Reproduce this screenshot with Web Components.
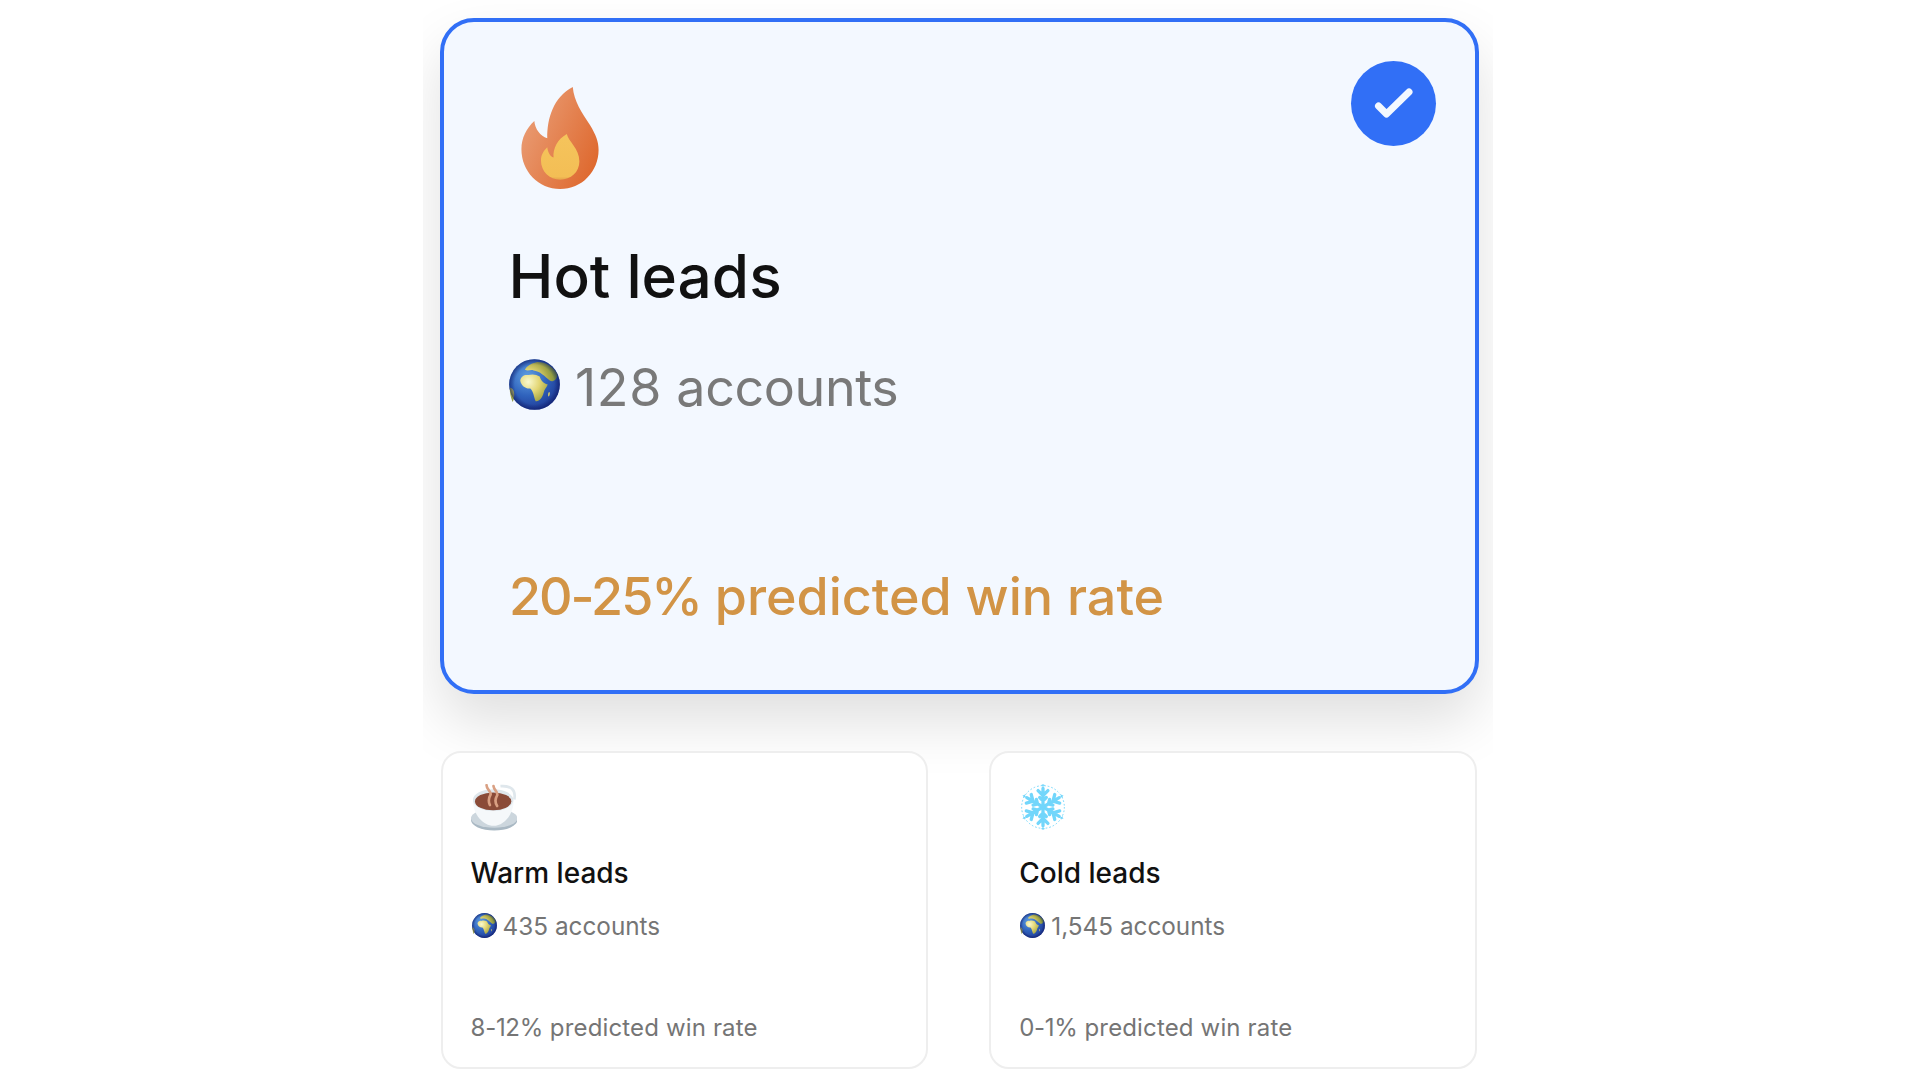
<!doctype html>
<html><head><meta charset="utf-8">
<style>
html,body{margin:0;background:#fff;height:100%;overflow:hidden}
body{font-family:Inter,"Liberation Sans",sans-serif;display:flex;justify-content:flex-start}
</style></head>
<body>
<lead-board>
  <lead-card featured name="Hot leads" accounts="128 accounts" rate="20-25% predicted win rate" icon="flame"></lead-card>
  <lead-card name="Warm leads" accounts="435 accounts" rate="8-12% predicted win rate" icon="coffee"></lead-card>
  <lead-card name="Cold leads" accounts="1,545 accounts" rate="0-1% predicted win rate" icon="snow"></lead-card>
</lead-board>
<script>
let gid=0;
const split=t=>{const i=t.indexOf(' ');return `<span class="num">${t.slice(0,i)}</span><span class="rest">${t.slice(i)}</span>`};
const ICONS={
flame:()=>`<svg viewBox="63 50 233 308" width="78" height="102"><defs><linearGradient id="f" x1="0" y1="0.2" x2="1" y2="0.8"><stop offset="0" stop-color="#ea9f78"/><stop offset="1" stop-color="#de672c"/></linearGradient><linearGradient id="g" x1="0" y1="0" x2="0" y2="1"><stop offset="0" stop-color="#f5c45c"/><stop offset=".93" stop-color="#f3be55"/><stop offset="1" stop-color="#e5a44a"/></linearGradient></defs>
<path fill="url(#f)" d="M218 50C222 95 245 125 270 165C288 195 296 215 296 240C296 305 245 358 180 358C115 358 63 305 63 238C63 205 78 175 102 153C104 178 120 198 141 205C140 145 160 80 218 50Z"/>
<path fill="url(#g)" d="M200 192C205 215 238 235 238 275C238 307 212 330 180 330C148 330 122 305 122 272C122 255 130 243 141 232C143 248 150 260 160 263C158 235 172 208 200 192Z"/></svg>`,
coffee:()=>`<svg viewBox="33 42 139 141" width="46" height="47"><path d="M122 48C150 46 170 56 164 88" fill="none" stroke="#dfe7ec" stroke-width="8"/>
<ellipse cx="103" cy="150" rx="70" ry="32" fill="#a9b8c3"/><ellipse cx="103" cy="145" rx="70" ry="29" fill="#ccd6dd"/>
<path d="M39 90C39 135 70 168 101 168C132 168 162 135 162 90Z" fill="#f5f8fa"/><ellipse cx="100" cy="90" rx="61" ry="33" fill="#dfe7ec"/><ellipse cx="100" cy="94" rx="55" ry="27" fill="#8a4b38"/>
<path d="M80 45C80 60 96 64 92 74C86 84 84 92 90 105M101 48C102 60 116 66 112 76C106 86 104 96 112 108" fill="none" stroke="#d9a083" stroke-width="8" stroke-linecap="round"/></svg>`,
snow:()=>`<svg viewBox="30 27 140 140" width="46" height="46" style="margin-left:1px"><g stroke="#72d6fb" fill="#72d6fb">${[0,60,120,180,240,300].map(r=>`<g transform="rotate(${r} 100 97)"><path d="M100 97V40M100 62 85 47M100 62 115 47M100 78 90 68M100 78 110 68" stroke-width="10" stroke-linecap="round" fill="none"/><path d="M100 26V36M95 31H105" stroke-width="3" fill="none"/></g>`).join('')}<circle cx="100" cy="97" r="65" fill="none" stroke-width="3" stroke-dasharray="5 6"/></g></svg>`,
globe:s=>{const k=++gid;return `<svg viewBox="27 24 151 152" width="${s}" height="${s}"><defs><radialGradient id="o${k}" cx=".36" cy=".34" r=".7"><stop offset="0" stop-color="#5f9fe2"/><stop offset=".55" stop-color="#2f62bc"/><stop offset="1" stop-color="#1f3a94"/></radialGradient><radialGradient id="l${k}" gradientUnits="userSpaceOnUse" cx="84" cy="92" r="88"><stop offset="0" stop-color="#fafad0"/><stop offset=".38" stop-color="#e3d674"/><stop offset=".7" stop-color="#a9a948"/><stop offset="1" stop-color="#6f8a3c"/></radialGradient><radialGradient id="e${k}" cx=".5" cy=".5" r=".5"><stop offset=".78" stop-color="#0d1a66" stop-opacity="0"/><stop offset="1" stop-color="#0d1a66" stop-opacity=".6"/></radialGradient></defs>
<circle cx="102.5" cy="100" r="75.5" fill="url(#o${k})"/>
<path fill="url(#l${k})" d="M60 88C62 76 72 70 84 72C96 68 108 70 118 76C122 88 128 96 142 100C138 110 132 114 130 124C126 140 116 152 106 150C100 136 100 122 90 112C78 114 62 104 60 88Z"/>
<path fill="url(#l${k})" d="M74 56C80 44 92 38 110 33C134 32 158 46 170 68C172 78 166 88 156 90C148 92 136 76 126 70C118 62 108 60 100 58C90 54 84 62 74 56Z"/>
<path fill="url(#l${k})" d="M29 110C36 110 42 118 42 130C42 140 40 148 37 152C32 140 28 124 29 110Z"/>
<path fill="#dccd68" d="M146 122C150 122 148 134 144 136C142 132 143 124 146 122Z"/>
<circle cx="102.5" cy="100" r="75.5" fill="url(#e${k})"/></svg>`}
};
class LeadBoard extends HTMLElement{constructor(){super();this.attachShadow({mode:'open'}).innerHTML=`<style>
:host{display:grid;box-sizing:border-box;width:1070px;height:1078px;margin-left:423px;overflow:hidden;padding:18px 0 0 17.6px;grid-template-columns:487.7px 487.7px;justify-content:start;column-gap:61px;row-gap:57px;grid-template-rows:676px 318px;align-content:start}
::slotted([featured]){grid-column:1/-1}
</style><slot></slot>`}}
class LeadCard extends HTMLElement{constructor(){super();const a=n=>this.getAttribute(n),big=this.hasAttribute('featured');
this.attachShadow({mode:'open'}).innerHTML=`<style>
:host{display:flex;flex-direction:column;box-sizing:border-box;position:relative;background:#fff;border:2px solid #eee;border-radius:20px;padding:31px 28px 22px;color:#757575}
:host([featured]){background:#f3f8ff;border:4px solid #316ff6;border-radius:34px;padding:65px 66px 61px 65px;box-shadow:0 28px 56px rgba(0,0,0,.125);z-index:0;margin-left:-.6px;margin-right:-2px;color:#797979}
:host(:not([featured])){z-index:1}
.i{display:block;height:47px}:host([featured]) .i{height:102px}
:host([featured]) .i svg{margin-left:12px}
svg{display:block}
h2{margin:24px 0 0;font:500 28px/36px Inter,sans-serif;color:#111}
:host([featured]) h2{margin-top:52px;font-size:60.3px;line-height:72px;margin-left:-.5px}
.n{display:flex;align-items:center;gap:6px;margin-top:18px;font:400 24.3px/34px Inter,sans-serif}
.n svg{margin:-2px 0 0 1px}
.n span{white-space:pre}
:host([featured]) .n{margin-top:43px;font-size:52px;line-height:64px;gap:15px}
:host([featured]) .n svg{margin:-7px 0 0}
:host([featured]) .n .num{letter-spacing:.7px}
:host([featured]) .n .rest{letter-spacing:-.4px}
.r{margin-top:auto;font:400 24px/34px Inter,sans-serif;white-space:pre}
.r .num{letter-spacing:-.3px}
.r .rest{letter-spacing:.15px}
:host([featured]) .r{font-weight:500;font-size:52px;line-height:64px;color:#d29446}
:host([featured]) .r .num{letter-spacing:-2px}
:host([featured]) .r .rest{letter-spacing:0}
.b{position:absolute;top:39px;right:39px;width:85px;height:85px;border-radius:50%;background:#316ff6}
</style><div class="i">${ICONS[a('icon')]()}</div><h2>${a('name')}</h2><div class="n">${ICONS.globe(big?51:25)}<span>${split(a('accounts'))}</span></div><div class="r">${split(a('rate'))}</div>${big?`<div class="b"><svg viewBox="0 0 85 85" width="85" height="85"><path d="M27.5 45 35.5 53 58 31" fill="none" stroke="#f3f8ff" stroke-width="7" stroke-linejoin="round" stroke-linecap="round"/></svg></div>`:''}`}}
customElements.define('lead-board',LeadBoard);customElements.define('lead-card',LeadCard);
</script>
</body></html>
